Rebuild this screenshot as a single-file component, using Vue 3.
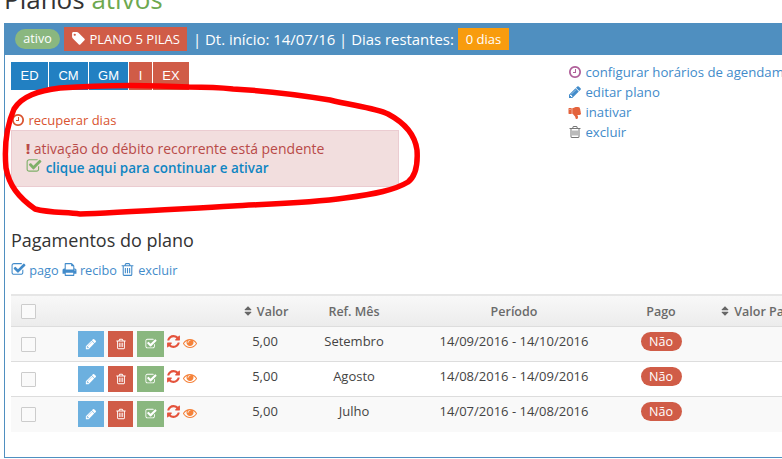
<script setup>
const icons = {
  tag: 'M576 448q0-53-37.500-90.500t-90.500-37.500-90.500 37.500-37.500 90.500 37.500 90.500 90.500 37.500 90.500-37.500 37.500-90.500zm1067 576q0 53-37 90l-491 492q-39 37-91 37-53 0-90-37l-715-716q-38-37-64.500-101t-26.500-117v-416q0-52 38-90t90-38h416q53 0 117 26.500t102 64.500l715 714q37 39 37 91z',
  clock: 'M1024 544v448q0 14-9 23t-23 9h-320q-14 0-23-9t-9-23v-64q0-14 9-23t23-9h224v-352q0-14 9-23t23-9h64q14 0 23 9t9 23zm416 352q0-148-73-273t-198-198-273-73-273 73-198 198-73 273 73 273 198 198 273 73 273-73 198-198 73-273zm224 0q0 209-103 385.500t-279.500 279.500-385.500 103-385.500-103-279.500-279.500-103-385.500 103-385.500 279.500-279.500 385.500-103 385.500 103 279.500 279.500 103 385.500z',
  check: 'M1472 930v318q0 119-84.500 203.500t-203.500 84.500h-832q-119 0-203.500-84.500t-84.500-203.500v-832q0-119 84.500-203.500t203.500-84.500h832q63 0 117 25 15 7 18 23 3 17-9 29l-49 49q-10 10-23 10-3 0-9-2-23-6-45-6h-832q-66 0-113 47t-47 113v832q0 66 47 113t113 47h832q66 0 113-47t47-113v-254q0-13 9-22l64-64q10-10 23-10 6 0 12 3 20 8 20 29zm231-489l-814 814q-24 24-57 24t-57-24l-430-430q-24-24-24-57t24-57l110-110q24-24 57-24t57 24l263 263 647-647q24-24 57-24t57 24l110 110q24 24 24 57t-24 57z',
  pencil: 'M491 1536l91-91-235-235-91 91v107h128v128h107zm523-928q0-22-22-22-10 0-17 7l-542 542q-7 7-7 17 0 22 22 22 10 0 17-7l542-542q7-7 7-17zm-54-192l416 416-832 832h-416v-416zm683 96q0 53-37 90l-166 166-416-416 166-165q36-38 90-38 53 0 91 38l235 234q37 39 37 91z',
  trash: 'M704 736v576q0 14-9 23t-23 9h-64q-14 0-23-9t-9-23v-576q0-14 9-23t23-9h64q14 0 23 9t9 23zm256 0v576q0 14-9 23t-23 9h-64q-14 0-23-9t-9-23v-576q0-14 9-23t23-9h64q14 0 23 9t9 23zm256 0v576q0 14-9 23t-23 9h-64q-14 0-23-9t-9-23v-576q0-14 9-23t23-9h64q14 0 23 9t9 23zm128 724v-948h-896v948q0 22 7 40.500t14.500 27 10.500 8.500h832q3 0 10.500-8.500t14.500-27 7-40.500zm-672-1076h448l-48-117q-7-9-17-11h-317q-10 2-17 11zm928 32v64q0 14-9 23t-23 9h-96v948q0 83-47 143.500t-113 60.500h-832q-66 0-113-58.500t-47-141.500v-952h-96q-14 0-23-9t-9-23v-64q0-14 9-23t23-9h309l70-167q15-37 54-63t79-26h320q40 0 79 26t54 63l70 167h309q14 0 23 9t9 23z',
  print: 'M448 1536h896v-256h-896v256zm0-640h896v-384h-160q-40 0-68-28t-28-68v-160h-640v640zm1152 64q0-26-19-45t-45-19-45 19-19 45 19 45 45 19 45-19 19-45zm128 0v416q0 13-9.500 22.500t-22.500 9.500h-224v160q0 40-28 68t-68 28h-960q-40 0-68-28t-28-68v-160h-224q-13 0-22.500-9.500t-9.500-22.500v-416q0-79 56.500-135.500t135.500-56.500h64v-544q0-40 28-68t68-28h672q40 0 88 20t76 48l152 152q28 28 48 76t20 88v256h64q79 0 135.500 56.500t56.500 135.500z',
  refresh: 'M1639 1056q0 5-1 7-64 268-268 434.500t-478 166.500q-146 0-282.500-55t-243.500-157l-129 129q-19 19-45 19t-45-19-19-45v-448q0-26 19-45t45-19h448q26 0 45 19t19 45-19 45l-137 137q71 66 161 102t187 36q134 0 250-65t186-179q11-17 53-117 8-23 30-23h192q13 0 22.500 9.500t9.500 22.500zm25-800v448q0 26-19 45t-45 19h-448q-26 0-45-19t-19-45 19-45l138-138q-148-137-349-137-134 0-250 65t-186 179q-11 17-53 117-8 23-30 23h-199q-13 0-22.500-9.500t-9.500-22.500v-7q65-268 270-434.500t480-166.500q146 0 284 55.500t245 156.500l130-129q19-19 45-19t45 19 19 45z',
  eye: 'M1664 960q-152-236-381-353 61 104 61 225 0 185-131.500 316.500t-316.500 131.500-316.500-131.500-131.500-316.500q0-121 61-225-229 117-381 353 133 205 333.500 326.500t434.500 121.500 434.500-121.500 333.500-326.500zm-720-384q0-20-14-34t-34-14q-125 0-214.500 89.500t-89.500 214.500q0 20 14 34t34 14 34-14 14-34q0-86 61-147t147-61q20 0 34-14t14-34zm848 384q0 34-20 69-140 230-376.500 368.500t-499.500 138.500-499.500-139-376.500-368q-20-35-20-69t20-69q140-229 376.500-368t499.500-139 499.500 139 376.500 368q20 35 20 69z',
  sort: 'M1408 1088q0 26-19 45l-448 448q-19 19-45 19t-45-19l-448-448q-19-19-19-45t19-45 45-19h896q26 0 45 19t19 45zm0-384q0 26-19 45t-45 19h-896q-26 0-45-19t-19-45 19-45l448-448q19-19 45-19t45 19l448 448q19 19 19 45z',
  thumb: 'M320 576q0 26-19 45t-45 19-45-19-19-45 19-45 45-19 45 19 19 45zm160 512v-640q0-26-19-45t-45-19h-288q-26 0-45 19t-19 45v640q0 26 19 45t45 19h288q26 0 45-19t19-45zm1129-149q55 61 55 149-1 78-57.500 135t-134.500 57h-277q4 14 8 24t11 22 10 18q18 37 27 57t19 58.500 10 76.500q0 24-.5 39t-5 45-12 50-24 45-40 40.500-60 26-82.500 10.500q-26 0-45-19-20-20-34-50t-19.500-52-12.500-61q-9-42-13.500-60.500t-17.500-48.500-31-48q-33-33-101-120-49-64-101-121t-76-59q-25-2-43.500-20.500t-18.500-43.500v-641q0-26 19-44.500t45-19.500q35-1 158-44 77-26 120.500-39.500t121.500-29 144-15.500h129q133 2 197 78 58 69 49 181 39 37 54 94 17 61 0 117 46 61 43 137 0 32-15 76z'
}
const tabs = [
  { t: 'ED', w: 37, c: 'blue' }, { t: 'CM', w: 39, c: 'blue' }, { t: 'GM', w: 39, c: 'blue' },
  { t: 'I', w: 23, c: 'red' }, { t: 'EX', w: 36, c: 'red' }
]
const rows = [
  { m: 'Setembro', p: '14/09/2016 - 14/10/2016' },
  { m: 'Agosto', p: '14/08/2016 - 14/09/2016' },
  { m: 'Julho', p: '14/07/2016 - 14/08/2016' }
]
const scribble = 'M189 87C150 85 100 85 60 88C38 91 22 96 14 109C7 125 4 145 6 168C9 185 18 197 35 209C50 213 65 212 80 214C110 213 160 210 233 206C270 204 310 203 345 198C375 194 395 190 408 182C416 176 418 165 417 150C415 135 405 123 388 114C375 108 355 106 330 100C300 95 270 91 233 89C215 87 200 87 189 87Z'
</script>

<template>
  <div class="page">
    <h3 class="title"><span class="titlein">Planos <span class="green">ativos</span></span></h3>
    <section class="panel">
      <header class="head">
        <span class="pill">ativo</span>
        <span class="plan"><svg class="i" viewBox="0 0 1792 1792"><path :d="icons.tag" /></svg> PLANO 5 PILAS</span>
        <span class="info">| Dt. início: 14/07/16 | Dias restantes:</span>
        <span class="days">0 dias</span>
      </header>
      <div class="body">
        <div class="top">
          <div class="left">
            <div class="tabs">
              <span v-for="tab in tabs" :key="tab.t" class="tab" :class="tab.c" :style="{ width: tab.w + 'px' }">{{ tab.t }}</span>
            </div>
            <div class="recover"><svg class="i" viewBox="0 0 1792 1792"><path :d="icons.clock" /></svg> recuperar dias</div>
            <div class="alert">
              <div><b class="bang">!</b> ativação do débito recorrente está pendente</div>
              <div class="go"><svg class="i ok" viewBox="0 0 1792 1792"><path :d="icons.check" /></svg> <a>clique aqui para continuar e ativar</a></div>
            </div>
          </div>
          <ul class="actions">
            <li><svg class="i mauve" viewBox="0 0 1792 1792"><path :d="icons.clock" /></svg> configurar horários de agendamento</li>
            <li><svg class="i" viewBox="0 0 1792 1792"><path :d="icons.pencil" /></svg> editar plano</li>
            <li><svg class="i thumb" viewBox="0 0 1792 1792"><path :d="icons.thumb" /></svg> inativar</li>
            <li><svg class="i grey" viewBox="0 0 1792 1792"><path :d="icons.trash" /></svg> excluir</li>
          </ul>
        </div>
        <h4 class="sub">Pagamentos do plano</h4>
        <div class="links">
          <a><svg class="i" viewBox="0 0 1792 1792"><path :d="icons.check" /></svg> pago</a>
          <a><svg class="i" viewBox="0 0 1792 1792"><path :d="icons.print" /></svg> recibo</a>
          <a><svg class="i" viewBox="0 0 1792 1792"><path :d="icons.trash" /></svg> excluir</a>
        </div>
        <table class="grid">
          <colgroup>
            <col style="width:59px" /><col style="width:162px" /><col style="width:66px" /><col style="width:112px" /><col style="width:208px" /><col style="width:86px" /><col style="width:120px" />
          </colgroup>
          <thead>
            <tr>
              <th class="c1"><span class="box" /></th>
              <th></th>
              <th><svg class="i s" viewBox="0 0 1792 1792"><path :d="icons.sort" /></svg> Valor</th>
              <th>Ref. Mês</th>
              <th>Período</th>
              <th>Pago</th>
              <th class="vp"><svg class="i s" viewBox="0 0 1792 1792"><path :d="icons.sort" /></svg> Valor Pago</th>
            </tr>
          </thead>
          <tbody>
            <tr v-for="r in rows" :key="r.m">
              <td class="c1 mid"><span class="box" /></td>
              <td class="mid">
                <div class="opsin">
                  <span class="btn b1"><svg class="i" viewBox="0 0 1792 1792"><path :d="icons.pencil" /></svg></span>
                  <span class="btn b2"><svg class="i" viewBox="0 0 1792 1792"><path :d="icons.trash" /></svg></span>
                  <span class="btn b3"><svg class="i" viewBox="0 0 1792 1792"><path :d="icons.check" /></svg></span>
                  <svg class="i rf" viewBox="0 0 1792 1792"><path :d="icons.refresh" /></svg>
                  <svg class="i ey" viewBox="0 0 1792 1792"><path :d="icons.eye" /></svg>
                </div>
              </td>
              <td>5,00</td>
              <td>{{ r.m }}</td>
              <td>{{ r.p }}</td>
              <td><span class="nao">Não</span></td>
              <td></td>
            </tr>
          </tbody>
        </table>
      </div>
    </section>
    <svg class="scribble" width="782" height="459" viewBox="0 0 782 459"><path :d="scribble" /></svg>
  </div>
</template>

<style>
html, body { margin: 0; overflow: hidden; background: #fff; }
</style>

<style scoped>
.page { position: relative; width: 782px; height: 459px; overflow: hidden; background: #fff; font-family: "Open Sans", sans-serif; color: #333; }
.i { width: 1em; height: 1em; fill: currentColor; vertical-align: -0.12em; }
.title { margin: 0; height: 23px; font-size: 26px; font-weight: 400; line-height: 23px; color: #333; padding-left: 4px; box-sizing: border-box; overflow: hidden; }
.titlein { display: block; margin-top: -12px; }
.green { color: #6da84f; }
.panel { margin-left: 4px; width: 820px; height: 435px; box-sizing: border-box; border: 1px solid #4f8fc0; border-top: 0; }
.head { height: 32px; background: #4f8fc0; color: #fff; display: flex; align-items: center; padding-left: 10px; }
.pill { width: 45px; height: 20px; line-height: 20px; border-radius: 10px; background: #8ab77f; font-size: 12.500px; text-align: center; }
.plan { margin-left: 4px; width: 123px; height: 24px; line-height: 24px; background: #d05c47; font-size: 13px; text-align: center; white-space: nowrap; }
.plan .i { width: 15px; height: 15px; vertical-align: -2px; }
.info { margin-left: 6px; font-size: 14.900px; white-space: nowrap; }
.days { margin-left: 4px; width: 51px; height: 22px; line-height: 22px; background: #f89c0e; font-size: 13px; text-align: center; }
.body { padding: 7px 0 0 6px; }
.top { display: flex; height: 149px; }
.left { width: 388px; }
.tabs { display: flex; gap: 1px; }
.tab { height: 28px; color: #fff; text-align: center; font: 13px/28px "Liberation Sans", sans-serif; }
.blue { background: #2280c2; }
.red { background: #d05c47; }
.recover { margin-top: 21px; height: 19px; line-height: 19px; font-size: 13px; color: #d9532f; white-space: nowrap; }
.recover .i { width: 14px; height: 14px; vertical-align: -2px; }
.alert { height: 57px; box-sizing: border-box; border: 1px solid #ebccd1; background: #f2dede; color: #b94a48; padding: 8px 0 0 14px; font-size: 14px; line-height: 20px; }
.bang { font-weight: 800; }
.go { margin-top: -1px; white-space: nowrap; }
.go a { color: #0f85c2; font-weight: 600; font-size: 13.450px; }
.ok { color: #7fb069; width: 16px; height: 16px; vertical-align: -1px; }
.actions { list-style: none; margin: 0 0 0 169px; padding: 0; font-size: 13.200px; line-height: 20px; color: #428bca; white-space: nowrap; }
.actions .i { width: 14px; height: 14px; vertical-align: -2px; }
.actions .mauve { color: #b0609a; }
.actions .thumb { color: #e4633c; }
.actions .grey { color: #777; }
.sub { margin: 18px 0 0; height: 22px; line-height: 22px; font-size: 18px; font-weight: 400; color: #333; }
.links { margin-top: 9px; height: 20px; line-height: 20px; font-size: 12.700px; color: #428bca; display: flex; gap: 3px; }
.links .i { width: 15px; height: 15px; vertical-align: -2px; }
.grid { margin-top: 14px; width: 813px; table-layout: fixed; border-collapse: collapse; font-size: 13px; }
.grid th { height: 29px; padding: 1px 0 0; font-weight: 600; font-size: 12.500px; color: #6a6a6a; text-align: center; background: linear-gradient(#f8f8f8, #ececec); border-top: 2px solid #e6e6e6; border-bottom: 1px solid #ddd; white-space: nowrap; }
.grid td { height: 35px; padding: 0 0 6px; text-align: center; border-bottom: 1px solid #ddd; vertical-align: middle; color: #444; white-space: nowrap; box-sizing: border-box; }
.grid td.mid { padding: 0; }
.grid tbody tr:nth-child(odd) td { background: #f9f9f9; }
.grid tbody tr:last-child td { border-bottom: 0; }
.grid th.vp { text-align: left; padding-left: 15px; }
.c1 { text-align: left !important; padding-left: 10px !important; }
.box { display: block; width: 13px; height: 13px; border: 1px solid #ccc; background: #fafafa; border-radius: 1px; }
.s { color: #666; width: 12px; height: 12px; vertical-align: -1px; }
.opsin { display: flex; align-items: center; padding-left: 8px; }
.btn { height: 26px; display: flex; align-items: center; justify-content: center; color: #fff; font-size: 12px; }
.b1 { width: 26px; background: #6cb0df; }
.b2 { width: 25px; margin-left: 4px; background: #d05c47; }
.b3 { width: 27px; margin-left: 4px; background: #8ab77f; }
.rf { color: #e4533c; font-size: 15px; align-self: flex-start; margin: 3px 0 0 2px; }
.ey { color: #f5823a; font-size: 14px; margin: -3px 0 0 2px; }
.nao { display: inline-block; width: 41px; height: 19px; line-height: 19px; border-radius: 10px; background: #d05c47; color: #fff; font-size: 12.500px; }
.scribble { position: absolute; left: 0; top: 0; pointer-events: none; }
.scribble path { fill: none; stroke: #f00; stroke-width: 5.500; stroke-linejoin: round; }
</style>
